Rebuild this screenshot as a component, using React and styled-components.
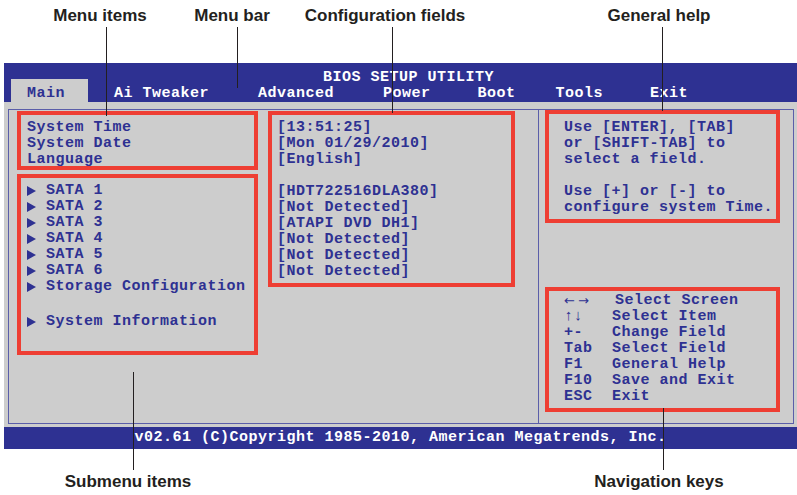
import React from "react";
import styled, { createGlobalStyle } from "styled-components";

const BLUE = "#2e3192";
const GRAY = "#cdcdcd";
const RED = "#ee3e33";
const INK = "#231f20";

const GlobalStyle = createGlobalStyle`
  html, body {
    margin: 0;
    padding: 0;
    background: #ffffff;
  }
`;

const tabs = [
  { label: "Main", ml: 7, active: true },
  { label: "Ai Tweaker", ml: 26 },
  { label: "Advanced", ml: 49 },
  { label: "Power", ml: 49 },
  { label: "Boot", ml: 47 },
  { label: "Tools", ml: 40 },
  { label: "Exit", ml: 47 },
];

const menuItems = ["System Time", "System Date", "Language"];
const sataItems = ["SATA 1", "SATA 2", "SATA 3", "SATA 4", "SATA 5", "SATA 6", "Storage Configuration"];

const configValues = [
  "[13:51:25]",
  "[Mon 01/29/2010]",
  "[English]",
  null,
  "[HDT722516DLA380]",
  "[Not Detected]",
  "[ATAPI DVD DH1]",
  "[Not Detected]",
  "[Not Detected]",
  "[Not Detected]",
];

const helpLines = [
  "Use [ENTER], [TAB]",
  "or [SHIFT-TAB] to",
  "select a field.",
  null,
  "Use [+] or [-] to",
  "configure system Time.",
];

const navKeys = [
  { key: "←→", desc: "Select Screen", wide: true },
  { key: "↑↓", desc: "Select Item" },
  { key: "+-", desc: "Change Field" },
  { key: "Tab", desc: "Select Field" },
  { key: "F1", desc: "General Help" },
  { key: "F10", desc: "Save and Exit" },
  { key: "ESC", desc: "Exit" },
];

const callouts = [
  { label: "Menu items", labelX: 100, labelY: 6, lineX: 106, lineTop: 27, lineHeight: 89 },
  { label: "Menu bar", labelX: 232, labelY: 6, lineX: 237, lineTop: 27, lineHeight: 61 },
  { label: "Configuration fields", labelX: 385, labelY: 6, lineX: 392, lineTop: 27, lineHeight: 86 },
  { label: "General help", labelX: 659, labelY: 6, lineX: 662, lineTop: 27, lineHeight: 84 },
  { label: "Submenu items", labelX: 128, labelY: 472, lineX: 133, lineTop: 372, lineHeight: 98 },
  { label: "Navigation keys", labelX: 659, labelY: 472, lineX: 663, lineTop: 408, lineHeight: 62 },
];

const App = () => {
  return (
    <>
      <GlobalStyle />
      <Figure>
        <Screen>
          <MenuBar>
            <Title>BIOS SETUP UTILITY</Title>
            <Tabs>
              {tabs.map((t) => (
                <Tab key={t.label} $ml={t.ml} $active={t.active}>
                  {t.label}
                </Tab>
              ))}
            </Tabs>
          </MenuBar>

          <Body>
            <Panel>
              <LeftPane>
                <MenuCol>
                  <RedBox $pad="3px 4px 0 6px">
                    {menuItems.map((m) => (
                      <Line key={m}>{m}</Line>
                    ))}
                  </RedBox>
                  <RedBox $pad="3px 4px 23px 6px">
                    {sataItems.map((m) => (
                      <Line key={m}>
                        <Arrow />
                        {m}
                      </Line>
                    ))}
                    <Line $mt={19}>
                      <Arrow />
                      System Information
                    </Line>
                  </RedBox>
                </MenuCol>

                <ConfigCol>
                  <RedBox $pad="3px 4px 5px 5px">
                    {configValues.map((v, i) => (
                      <Line key={i}>{v || "\u00a0"}</Line>
                    ))}
                  </RedBox>
                </ConfigCol>
              </LeftPane>

              <RightPane>
                <RedBox $pad="4px 0 5px 15px">
                  {helpLines.map((h, i) => (
                    <Line key={i}>{h || "\u00a0"}</Line>
                  ))}
                </RedBox>
                <NavBox $pad="0 4px 5px 15px">
                  {navKeys.map((n) => (
                    <Line key={n.key}>
                      <Key $wide={n.wide}>{n.key}</Key>
                      {n.desc}
                    </Line>
                  ))}
                </NavBox>
              </RightPane>
            </Panel>
          </Body>

          <Footer>v02.61 (C)Copyright 1985-2010, American Megatrends, Inc.</Footer>
        </Screen>

        {callouts.map((c) => (
          <React.Fragment key={c.label}>
            <CalloutLabel $x={c.labelX} $y={c.labelY}>
              {c.label}
            </CalloutLabel>
            <Leader $x={c.lineX} $top={c.lineTop} $h={c.lineHeight} />
          </React.Fragment>
        ))}
      </Figure>
    </>
  );
};

export default App;

const Figure = styled.div`
  position: relative;
  width: 797px;
  height: 495px;
  overflow: hidden;
  background: #ffffff;
`;

const Screen = styled.div`
  margin: 63px 0 0 4px;
  width: 793px;
  font-family: "Liberation Mono", "DejaVu Sans Mono", monospace;
  font-weight: 700;
  font-size: 15px;
  letter-spacing: 0.5px;
  line-height: 16px;
  white-space: pre;
`;

const MenuBar = styled.div`
  display: grid;
  height: 39px;
  background: ${BLUE};
  color: #ffffff;
`;

const Title = styled.div`
  grid-area: 1 / 1;
  align-self: start;
  margin-top: 8px;
  padding-left: 16px;
  line-height: 14px;
  text-align: center;
`;

const Tabs = styled.div`
  grid-area: 1 / 1;
  align-self: end;
  display: flex;
  height: 23px;
`;

const Tab = styled.div`
  margin-left: ${(p) => p.$ml}px;
  padding: ${(p) => (p.$active ? "8px 23px 0 16px" : "8px 0 0 0")};
  line-height: 14px;
  background: ${(p) => (p.$active ? GRAY : "transparent")};
  color: ${(p) => (p.$active ? BLUE : "#ffffff")};
`;

const Body = styled.div`
  background: ${GRAY};
  padding: 7px 3px 3px 4px;
  color: ${BLUE};
`;

const Panel = styled.div`
  display: flex;
  height: 313px;
  border: 1px solid #5b5ea9;
`;

const LeftPane = styled.div`
  display: flex;
  align-items: flex-start;
  flex-shrink: 0;
  width: 529px;
  padding: 1px 0 0 8px;
  box-sizing: border-box;
`;

const MenuCol = styled.div`
  display: flex;
  flex-direction: column;
  gap: 4px;
  width: 241px;
`;

const ConfigCol = styled.div`
  margin-left: 10px;
  width: 247px;
`;

const RightPane = styled.div`
  flex: 1;
  min-width: 0;
  display: flex;
  flex-direction: column;
  border-left: 1px solid #5b5ea9;
  padding: 0 13px 0 6px;
`;

const RedBox = styled.div`
  border: 4px solid ${RED};
  padding: ${(p) => p.$pad};
`;

const NavBox = styled(RedBox)`
  margin-top: 64px;
`;

const Line = styled.div`
  display: flex;
  align-items: center;
  height: 16px;
  box-sizing: border-box;
  padding-top: 3px;
  margin-top: ${(p) => p.$mt || 0}px;
`;

const Arrow = styled.span`
  display: inline-block;
  width: 0;
  height: 0;
  border-top: 5px solid transparent;
  border-bottom: 5px solid transparent;
  border-left: 9px solid ${BLUE};
  margin-right: 10px;
`;

const Key = styled.span`
  width: ${(p) => (p.$wide ? 51 : 48)}px;
  flex-shrink: 0;
  font-family: ${(p) => (p.$wide ? '"DejaVu Sans", sans-serif' : "inherit")};
  font-size: ${(p) => (p.$wide ? "13px" : "inherit")};
  line-height: ${(p) => (p.$wide ? "12px" : "inherit")};
  font-weight: ${(p) => (p.$wide ? 400 : 700)};
  letter-spacing: ${(p) => (p.$wide ? "3px" : "inherit")};
`;

const Footer = styled.div`
  height: 22px;
  line-height: 22px;
  background: ${BLUE};
  color: #ffffff;
  text-align: center;
`;

const CalloutLabel = styled.div`
  position: absolute;
  left: ${(p) => p.$x}px;
  top: ${(p) => p.$y}px;
  transform: translateX(-50%);
  font-family: "Liberation Sans", Arial, sans-serif;
  font-weight: 700;
  font-size: 17px;
  line-height: 20px;
  color: ${INK};
  white-space: nowrap;
`;

const Leader = styled.div`
  position: absolute;
  left: ${(p) => p.$x}px;
  top: ${(p) => p.$top}px;
  width: 1px;
  height: ${(p) => p.$h}px;
  background: ${INK};
`;
